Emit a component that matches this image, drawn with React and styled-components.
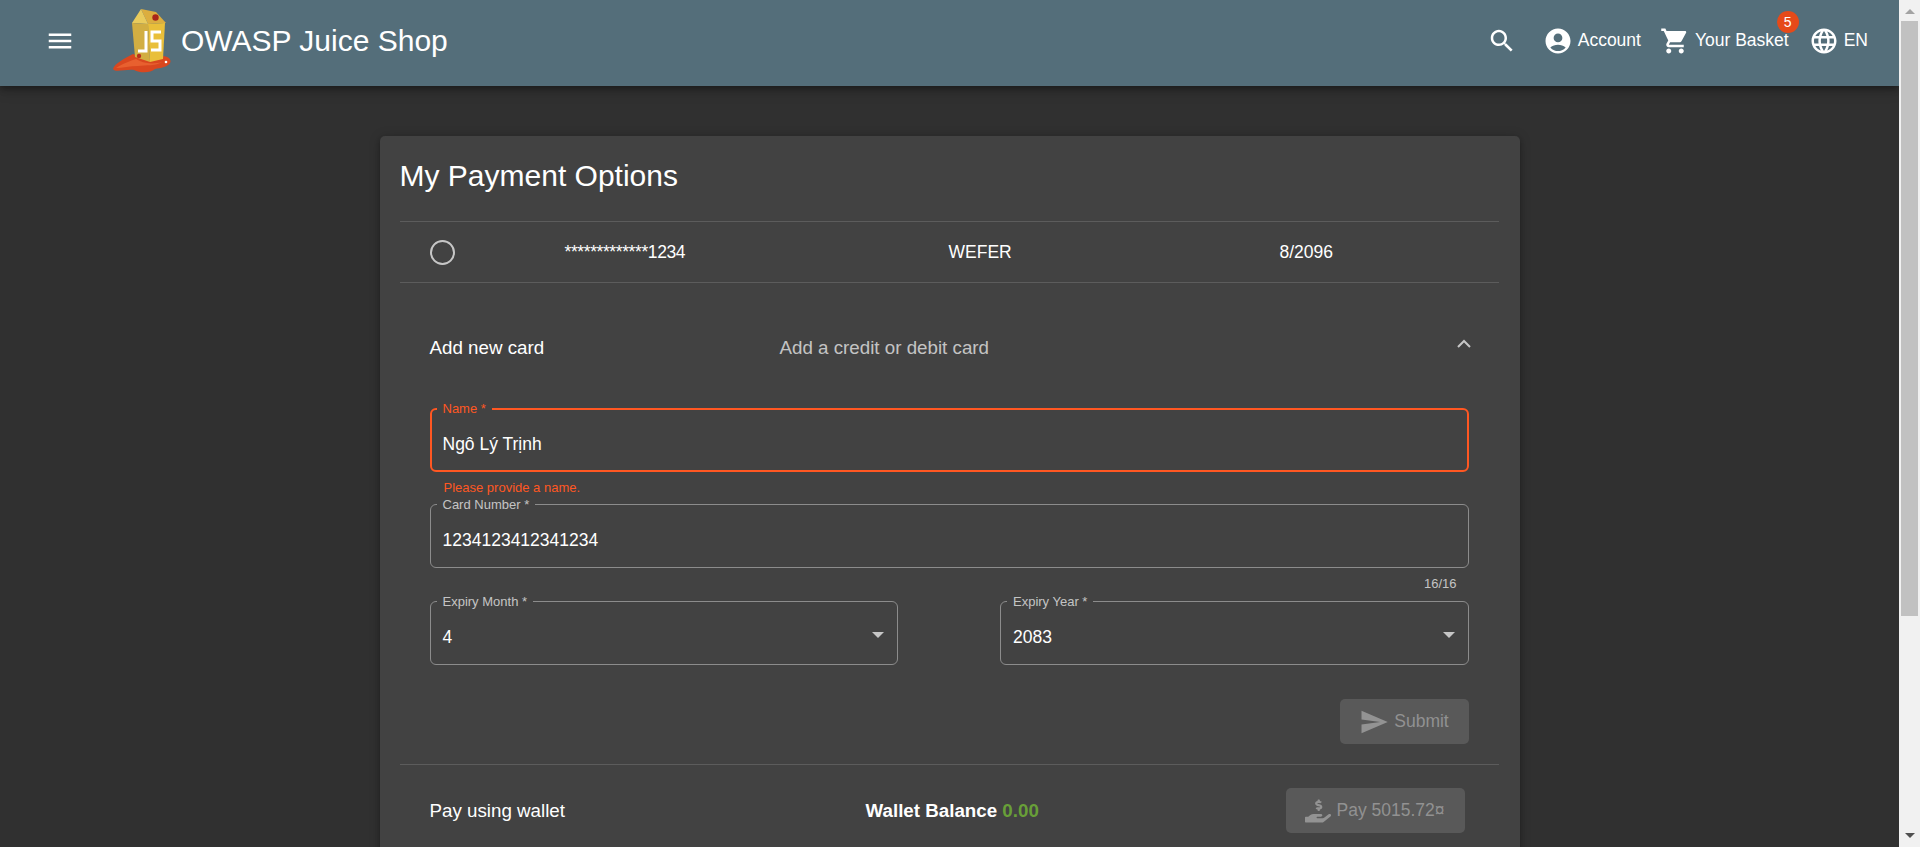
import React from 'react';
import styled, { createGlobalStyle } from 'styled-components';
import { FaHandHoldingUsd } from 'react-icons/fa';

const GlobalStyle = createGlobalStyle`
  html, body {
    height: 100%;
    overflow: hidden;
  }
  body {
    margin: 0;
    background: #303030;
    color: #fff;
    font-family: "Liberation Sans", Arial, sans-serif;
  }
`;

const Window = styled.div`
  height: 100vh;
  display: flex;
`;

const Page = styled.div`
  flex: 1;
  min-width: 0;
  overflow: hidden;
`;

const ScrollRail = styled.div`
  width: 21px;
  flex: none;
  display: flex;
  flex-direction: column;
  align-items: center;
  background: #f1f1f1;
`;

const ScrollArrow = styled.div`
  height: 21px;
  box-sizing: border-box;
  padding: ${p => (p.$down ? '0 0 2px' : '2px 0 0')};
  flex: none;
  display: flex;
  align-items: center;
  justify-content: center;
  &::before {
    content: '';
    border-left: 5px solid transparent;
    border-right: 5px solid transparent;
    ${p => (p.$down ? 'border-top: 5px solid #505050;' : 'border-bottom: 5px solid #a3a3a3;')}
  }
`;

const ScrollThumb = styled.div`
  width: 17px;
  height: 595px;
  flex: none;
  background: #c1c1c1;
`;

const ScrollGap = styled.div`
  flex: 1;
`;

const Toolbar = styled.header`
  height: 86px;
  box-sizing: border-box;
  padding: 0 31px 5px 48px;
  display: flex;
  align-items: center;
  background: #546e7a;
  box-shadow: 0 3px 6px rgba(0, 0, 0, 0.3), 0 6px 12px rgba(0, 0, 0, 0.14);
  position: relative;
`;

const MenuIcon = styled.svg`
  width: 30px;
  height: 30px;
  margin-left: -3px;
  fill: #fff;
`;

const Logo = styled.svg`
  width: 59px;
  height: 66px;
  margin-left: 37px;
`;

const Brand = styled.span`
  font-size: 30px;
  margin-left: 10px;
`;

const Spacer = styled.div`
  flex: 1;
`;

const NavIcon = styled.svg`
  width: 30px;
  height: 30px;
  fill: #fff;
  flex: none;
`;

const NavItem = styled.div`
  display: flex;
  align-items: center;
  gap: 5px;
  margin-left: ${p => p.$left}px;
  font-size: 17.5px;
  position: relative;
`;

const Badge = styled.span`
  position: absolute;
  top: -15px;
  right: -10px;
  width: 22px;
  height: 22px;
  border-radius: 50%;
  background: #e64a19;
  font-size: 14px;
  line-height: 22px;
  text-align: center;
`;

const Card = styled.main`
  width: 1140px;
  box-sizing: border-box;
  margin: 50px auto 30px;
  padding: 0 21px 300px 20px;
  background: #424242;
  border-radius: 5px;
  box-shadow: 0 3px 4px rgba(0, 0, 0, 0.25), 0 1px 12px rgba(0, 0, 0, 0.2);
`;

const Title = styled.h1`
  margin: 0 0 26px;
  padding-top: 21px;
  font-size: 30px;
  font-weight: 400;
  line-height: 38px;
`;

const Divider = styled.hr`
  margin: 0;
  border: 0;
  border-top: 1px solid rgba(255, 255, 255, 0.14);
`;

const CardRow = styled.div`
  height: 60px;
  padding-left: 30px;
  display: grid;
  grid-template-columns: 135px 384px 331px 1fr;
  align-items: center;
  font-size: 17.5px;
`;

const Radio = styled.span`
  width: 25px;
  height: 25px;
  box-sizing: border-box;
  border: 2px solid rgba(255, 255, 255, 0.7);
  border-radius: 50%;
`;

const MaskedNumber = styled.span`
  letter-spacing: -0.4px;
`;

const PanelHeader = styled.div`
  margin-top: 50px;
  padding: 0 30px;
  height: 30px;
  display: flex;
  align-items: center;
  font-size: 18.75px;
  position: relative;
`;

const PanelTitle = styled.span`
  width: 350px;
`;

const PanelDescription = styled.span`
  color: rgba(255, 255, 255, 0.7);
`;

const Chevron = styled.svg`
  position: absolute;
  right: 26px;
  top: 2px;
  width: 18px;
  height: 18px;
  fill: none;
  stroke: rgba(255, 255, 255, 0.7);
  stroke-width: 2;
`;

const Form = styled.form`
  margin-top: 45px;
  padding: 0 30px;
`;

const Field = styled.div`
  position: relative;
  height: 64px;
  box-sizing: border-box;
  border: ${p => (p.$error ? '2px solid #ff5722' : '1px solid #8c8c8c')};
  border-radius: 6px;
  display: flex;
  align-items: center;
  padding-left: ${p => (p.$error ? 11 : 12)}px;
  padding-top: 9px;
`;

const FieldLabel = styled.label`
  position: absolute;
  top: ${p => (p.$error ? -9 : -8)}px;
  left: ${p => (p.$error ? 5 : 6)}px;
  padding: 0 6px;
  background: #424242;
  color: ${p => (p.$error ? '#ff5722' : 'rgba(255, 255, 255, 0.7)')};
  font-size: 13px;
  line-height: 16px;
`;

const FieldInput = styled.input`
  width: 100%;
  padding: 0;
  border: 0;
  outline: 0;
  background: none;
  color: #fff;
  font: 17.5px "Liberation Sans", Arial, sans-serif;
`;

const FieldHint = styled.div`
  height: 32px;
  padding: 8px 12px 0 14px;
  box-sizing: border-box;
  font-size: 13px;
  line-height: 16px;
  color: ${p => (p.$error ? '#ff5722' : 'rgba(255, 255, 255, 0.7)')};
  text-align: ${p => (p.$right ? 'right' : 'left')};
`;

const SelectRow = styled.div`
  margin-top: 1px;
  display: grid;
  grid-template-columns: 1fr 1fr;
  column-gap: 102px;
`;

const SelectValue = styled.span`
  flex: 1;
  font-size: 17.5px;
`;

const SelectArrow = styled.span`
  width: 0;
  height: 0;
  margin-right: 13px;
  margin-top: -5px;
  border-left: 6px solid transparent;
  border-right: 6px solid transparent;
  border-top: 6px solid rgba(255, 255, 255, 0.7);
`;

const FormActions = styled.div`
  margin-top: 34px;
  margin-bottom: 20px;
  display: flex;
  justify-content: flex-end;
`;

const DisabledButton = styled.button`
  height: 45px;
  width: ${p => p.$width}px;
  padding: 0;
  border: 0;
  border-radius: 5px;
  background: rgba(255, 255, 255, 0.12);
  color: rgba(255, 255, 255, 0.35);
  font: 17.5px "Liberation Sans", Arial, sans-serif;
  display: flex;
  align-items: center;
  justify-content: center;
  gap: 5px;
`;

const SendIcon = styled.svg`
  width: 30px;
  height: 30px;
  fill: currentColor;
`;

const WalletRow = styled.div`
  margin-top: 23px;
  padding: 0 34px 0 30px;
  display: flex;
  align-items: center;
  font-size: 18.75px;
`;

const WalletTitle = styled.span`
  width: 436px;
`;

const WalletBalance = styled.span`
  flex: 1;
  font-weight: 700;
`;

const BalanceAmount = styled.span`
  color: #689f38;
`;

export default function App() {
  return (
    <Window>
      <GlobalStyle />
      <Page>
        <Toolbar>
          <MenuIcon viewBox="0 0 24 24">
            <path d="M3 18h18v-2H3v2zm0-5h18v-2H3v2zm0-7v2h18V6H3z" />
          </MenuIcon>
          <Logo viewBox="12 7 59 66">
            <path d="M13 68C15 62 24 58 33 53C40 56 52 60 59 56C66 54 71 57 70.5 61C69 66 60 67 55 68C50 72.500 40 72 34 69C26 68 15 72 13 68Z" fill="#d9471f" />
            <path d="M16 67C24 62 30 60 36 58C42 62 52 64 62 61C56 65 46 64 38 65C30 65 22 67 16 67Z" fill="#e8602f" />
            <path d="M41 8L56 11L66 22L48 23Z" fill="#dcae3f" />
            <path d="M41 8L32 22L48 23Z" fill="#e9cb5c" />
            <path d="M32 22L48 23L50 61L35 56Z" fill="#d2ae42" />
            <path d="M48 23L65 22L63 58L50 61Z" fill="#e9bf3a" />
            <circle cx="55.5" cy="16.5" r="3.2" fill="#a8261a" />
            <circle cx="39" cy="55" r="2.2" fill="#b8301c" />
            <path d="M46 30V50H38" fill="none" stroke="#fff" strokeWidth="3" />
            <path d="M61 31H52V40H60V49H51" fill="none" stroke="#fff" strokeWidth="3" />
            <circle cx="66" cy="61" r="1.3" fill="#fff" />
          </Logo>
          <Brand>OWASP Juice Shop</Brand>
          <Spacer />
          <NavIcon viewBox="0 0 24 24">
            <path d="M15.5 14h-.79l-.28-.27C15.41 12.59 16 11.11 16 9.5 16 5.91 13.09 3 9.5 3S3 5.91 3 9.5 5.91 16 9.5 16c1.61 0 3.09-.59 4.23-1.57l.27.28v.79l5 4.99L20.49 19l-4.99-5zm-6 0C7.01 14 5 11.99 5 9.5S7.01 5 9.5 5 14 7.01 14 9.5 11.99 14 9.5 14z" />
          </NavIcon>
          <NavItem $left={26}>
            <NavIcon viewBox="0 0 24 24">
              <path d="M12 2C6.48 2 2 6.48 2 12s4.48 10 10 10 10-4.48 10-10S17.52 2 12 2zm0 4c1.93 0 3.5 1.57 3.5 3.5S13.93 13 12 13s-3.5-1.57-3.5-3.5S10.07 6 12 6zm0 14c-2.03 0-4.43-.82-6.14-2.88C7.55 15.8 9.68 15 12 15s4.45.8 6.14 2.12C16.43 19.18 14.03 20 12 20z" />
            </NavIcon>
            Account
          </NavItem>
          <NavItem $left={19}>
            <NavIcon viewBox="0 0 24 24">
              <path d="M7 18c-1.1 0-1.99.9-1.99 2S5.9 22 7 22s2-.9 2-2-.9-2-2-2zM1 2v2h2l3.6 7.59-1.35 2.45c-.16.28-.25.61-.25.96 0 1.1.9 2 2 2h12v-2H7.42c-.14 0-.25-.11-.25-.25l.03-.12.9-1.63h7.45c.75 0 1.41-.41 1.75-1.03l3.58-6.49c.08-.14.12-.31.12-.48 0-.55-.45-1-1-1H5.21l-.94-2H1zm16 16c-1.1 0-1.99.9-1.99 2s.89 2 1.99 2 2-.9 2-2-.9-2-2-2z" />
            </NavIcon>
            Your Basket
            <Badge>5</Badge>
          </NavItem>
          <NavItem $left={20}>
            <NavIcon viewBox="0 0 24 24">
              <path d="M11.99 2C6.47 2 2 6.48 2 12s4.47 10 9.99 10C17.52 22 22 17.52 22 12S17.52 2 11.99 2zm6.93 6h-2.95c-.32-1.25-.78-2.45-1.38-3.56 1.84.63 3.37 1.91 4.33 3.56zM12 4.04c.83 1.2 1.48 2.53 1.91 3.96h-3.82c.43-1.43 1.08-2.76 1.91-3.96zM4.26 14C4.1 13.36 4 12.69 4 12s.1-1.36.26-2h3.38c-.08.66-.14 1.32-.14 2 0 .68.06 1.34.14 2H4.26zm.82 2h2.95c.32 1.25.78 2.45 1.38 3.56-1.84-.63-3.37-1.9-4.33-3.56zm2.95-8H5.08c.96-1.66 2.49-2.93 4.33-3.56C8.81 5.55 8.35 6.75 8.03 8zM12 19.96c-.83-1.2-1.48-2.53-1.91-3.96h3.82c-.43 1.43-1.08 2.76-1.91 3.96zM14.34 14H9.66c-.09-.66-.16-1.32-.16-2 0-.68.07-1.35.16-2h4.68c.09.65.16 1.32.16 2 0 .68-.07 1.34-.16 2zm.25 5.56c.6-1.11 1.06-2.31 1.38-3.56h2.95c-.96 1.65-2.49 2.93-4.33 3.56zM16.36 14c.08-.66.14-1.32.14-2 0-.68-.06-1.34-.14-2h3.38c.16.64.26 1.31.26 2s-.1 1.36-.26 2h-3.38z" />
            </NavIcon>
            EN
          </NavItem>
        </Toolbar>
        <Card>
          <Title>My Payment Options</Title>
          <Divider />
          <CardRow>
            <Radio />
            <MaskedNumber>*************1234</MaskedNumber>
            <span>WEFER</span>
            <span>8/2096</span>
          </CardRow>
          <Divider />
          <PanelHeader>
            <PanelTitle>Add new card</PanelTitle>
            <PanelDescription>Add a credit or debit card</PanelDescription>
            <Chevron viewBox="0 0 18 18">
              <path d="M3 12L9 6L15 12" />
            </Chevron>
          </PanelHeader>
          <Form>
            <Field $error>
              <FieldLabel $error>Name *</FieldLabel>
              <FieldInput defaultValue="Ngô Lý Trịnh" />
            </Field>
            <FieldHint $error>Please provide a name.</FieldHint>
            <Field>
              <FieldLabel>Card Number *</FieldLabel>
              <FieldInput defaultValue="1234123412341234" />
            </Field>
            <FieldHint $right>16/16</FieldHint>
            <SelectRow>
              <Field>
                <FieldLabel>Expiry Month *</FieldLabel>
                <SelectValue>4</SelectValue>
                <SelectArrow />
              </Field>
              <Field>
                <FieldLabel>Expiry Year *</FieldLabel>
                <SelectValue>2083</SelectValue>
                <SelectArrow />
              </Field>
            </SelectRow>
            <FormActions>
              <DisabledButton type="button" disabled $width={129}>
                <SendIcon viewBox="0 0 24 24">
                  <path d="M2.01 21L23 12 2.01 3 2 10l15 2-15 2z" />
                </SendIcon>
                Submit
              </DisabledButton>
            </FormActions>
          </Form>
          <Divider />
          <WalletRow>
            <WalletTitle>Pay using wallet</WalletTitle>
            <WalletBalance>
              Wallet Balance <BalanceAmount>0.00</BalanceAmount>
            </WalletBalance>
            <DisabledButton type="button" disabled $width={179}>
              <FaHandHoldingUsd size={26} />
              Pay 5015.72¤
            </DisabledButton>
          </WalletRow>
        </Card>
      </Page>
      <ScrollRail>
        <ScrollArrow />
        <ScrollThumb />
        <ScrollGap />
        <ScrollArrow $down />
      </ScrollRail>
    </Window>
  );
}
